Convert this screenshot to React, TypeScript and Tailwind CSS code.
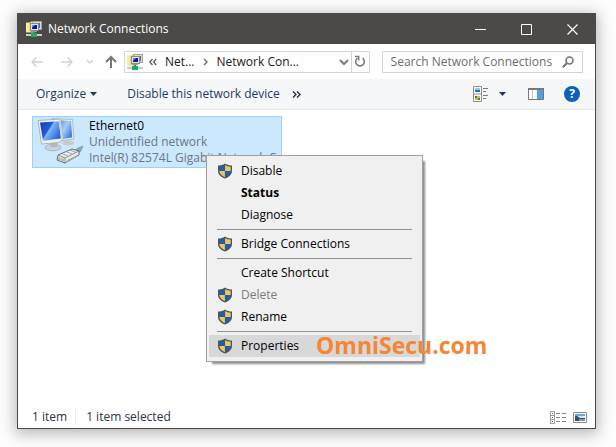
import React from 'react';

function NetworkFolderIcon() {
  return (
    <svg width="16" height="16" viewBox="0 0 16 16" className="shrink-0" aria-hidden="true">
      <path d="M0 1.500h4l1-1h4v11H0z" fill="#ecd67a" />
      <path d="M0 2h3v9H0z" fill="#f8eba0" />
      <rect x="6.500" y="0.500" width="9" height="8" fill="#dddace" stroke="#a3a198" />
      <rect x="9" y="2" width="5" height="5" fill="#4667c4" />
      <rect x="4.500" y="2.500" width="8" height="7" fill="#e4e2d8" stroke="#8d8c85" />
      <rect x="6" y="4" width="5" height="4" fill="#0b1a9c" />
      <path d="M6 4h3l-3 3z" fill="#5a8be8" />
      <rect x="5" y="10" width="6" height="1" fill="#9c9a90" />
      <rect x="7" y="11" width="2" height="2" fill="#1f9d63" />
      <rect x="0" y="13" width="16" height="2" fill="#c4cfc8" />
      <rect x="5" y="12" width="6" height="4" fill="#1fa869" />
    </svg>
  );
}

function ArrowIcon({ direction, className }: { direction: 'left' | 'right' | 'up'; className: string }) {
  const paths = {
    left: 'M13 7H2M6.500 2.500 2 7l4.500 4.500',
    right: 'M1 7h11M7.500 2.500 12 7l-4.500 4.500',
    up: 'M7 13V2M2 7l5-5 5 5',
  };
  return (
    <svg width="14" height="14" viewBox="0 0 14 14" fill="none" stroke="currentColor" className={className} aria-hidden="true">
      <path d={paths[direction]} strokeWidth={direction === 'up' ? 2 : 1.4} />
    </svg>
  );
}

function ShieldIcon() {
  return (
    <svg width="16" height="16" viewBox="0 0 16 16" className="shrink-0" aria-hidden="true">
      <path d="M8 .5C6 2 3.500 2.500 1 2.500V8c0 3.500 3 6 7 7.600C12 14 15 11.500 15 8V2.500C12.500 2.500 10 2 8 .5z" fill="#4b5658" />
      <path d="M7.900 2C6.400 3 4.400 3.600 2.300 3.700V8h5.600z" fill="#1d62a8" />
      <path d="M8.100 2c1.500 1 3.500 1.600 5.600 1.700V8H8.100z" fill="#f0c468" />
      <path d="M2.300 8.100c.2 2.700 2.500 4.700 5.600 6.100V8.100z" fill="#f0c468" />
      <path d="M13.700 8.100c-.2 2.700-2.500 4.700-5.600 6.100V8.100z" fill="#1d62a8" />
    </svg>
  );
}

function EthernetIcon() {
  return (
    <svg width="48" height="48" viewBox="0 0 48 48" className="shrink-0" aria-hidden="true">
      <defs>
        <linearGradient id="screen" x1="0" y1="0" x2="1" y2="0.600">
          <stop offset="0" stopColor="#0d3cb4" />
          <stop offset="0.480" stopColor="#1f5fdc" />
          <stop offset="0.520" stopColor="#82b4f6" />
          <stop offset="1" stopColor="#2568de" />
        </linearGradient>
        <linearGradient id="backScreen" x1="0" y1="0" x2="1" y2="0.600">
          <stop offset="0" stopColor="#2e6cd8" />
          <stop offset="0.600" stopColor="#a8cef8" />
          <stop offset="1" stopColor="#3f82e4" />
        </linearGradient>
      </defs>
      <ellipse cx="31" cy="25" rx="6" ry="2.500" fill="#c3ccd3" />
      <path d="M15 .6 35.500 1.500 37 21 22 23z" fill="#e9edf0" stroke="#9ba9b5" strokeWidth=".7" />
      <path d="M18 2 34 3 35.200 19.500 22 21.500z" fill="url(#backScreen)" />
      <ellipse cx="16" cy="29.500" rx="8" ry="3.300" fill="#cbd2d8" stroke="#98a4ad" strokeWidth=".7" />
      <path d="m13 24 7-1 .5 6h-7z" fill="#aeb9c2" />
      <path d="M1 2.500 23.500 1 26 21.500 22 24.500 4.500 26z" fill="#f0f2f4" stroke="#9aa5af" strokeWidth=".8" />
      <path d="M3 4.500 21.800 3.200 24 20.500 6 22.800z" fill="url(#screen)" />
      <path d="M21.800 3.200 23.500 1 26 21.500l-2-1z" fill="#cdd4da" />
      <path d="m37 33 4-3 5-2-2 5-4 3z" fill="#72b5a5" stroke="#6f9c93" strokeWidth=".6" />
      <path d="m21 37 14-6 7 2v4l-14 8-8-3z" fill="#eceeee" stroke="#59666b" strokeWidth=".9" />
      <path d="m21 37 7 3 14-7M28 40v5" fill="none" stroke="#6b777b" strokeWidth=".8" />
      <path d="m25 35.500 6 2.500m-2-4.500 6 2.500m-2-4 6 2.500" stroke="#899397" strokeWidth=".8" />
      <path d="m30 42 10-5v1.500L30 44z" fill="#a4adb0" />
      <path d="M22 39v3m2-2v2.500m2-2v3" stroke="#59676e" strokeWidth=".8" />
      <path d="M23 40h2v2h-2z" fill="#d7cf5f" />
    </svg>
  );
}

interface MenuEntry {
  label: string;
  shield?: boolean;
  bold?: boolean;
  disabled?: boolean;
  active?: boolean;
}

const menuGroups: MenuEntry[][] = [
  [{ label: 'Disable', shield: true }, { label: 'Status', bold: true }, { label: 'Diagnose' }],
  [{ label: 'Bridge Connections', shield: true }],
  [{ label: 'Create Shortcut' }, { label: 'Delete', shield: true, disabled: true }, { label: 'Rename', shield: true }],
  [{ label: 'Properties', shield: true, active: true }],
];

function TitleBar() {
  return (
    <header className="flex h-[30px] items-center bg-[#4b4a48] pl-2 text-white">
      <NetworkFolderIcon />
      <h1 className="ml-1.5 flex-1">Network Connections</h1>
      <button type="button" aria-label="Minimize" className="flex h-full w-[46px] items-center justify-center">
        <svg width="11" height="11" stroke="currentColor"><path d="M0 5.500h11" /></svg>
      </button>
      <button type="button" aria-label="Maximize" className="flex h-full w-[46px] items-center justify-center">
        <svg width="11" height="11" fill="none" stroke="currentColor"><path d="M.5.500h10v10H.5z" /></svg>
      </button>
      <button type="button" aria-label="Close" className="flex h-full w-[46px] items-center justify-center">
        <svg width="11" height="11" stroke="currentColor" strokeWidth="1.200"><path d="m.5.500 10 10m0-10-10 10" /></svg>
      </button>
    </header>
  );
}

function NavigationBar() {
  return (
    <nav className="flex h-[35px] items-center pr-3 pl-3 text-[#1a1a1a]">
      <button type="button" aria-label="Back" disabled><ArrowIcon direction="left" className="text-[#cfcfcf]" /></button>
      <button type="button" aria-label="Forward" disabled className="ml-4"><ArrowIcon direction="right" className="text-[#cfcfcf]" /></button>
      <button type="button" aria-label="Recent locations" className="ml-3 text-[#cfcfcf]">
        <svg width="8" height="6" fill="none" stroke="currentColor" strokeWidth="1.400"><path d="m1 1 3 3 3-3" /></svg>
      </button>
      <button type="button" aria-label="Up" className="ml-2.5"><ArrowIcon direction="up" className="text-[#767676]" /></button>

      <div className="ml-1.5 flex h-[22px] min-w-0 flex-[241] items-center border border-[#d5d5d5] pl-0.5">
        <NetworkFolderIcon />
        <button type="button" aria-label="Previous folders" className="ml-1.5 text-[#555]">
          <svg width="8" height="8" fill="none" stroke="currentColor" strokeWidth="1.200"><path d="M3.500 1 .8 4l2.700 3M7.200 1 4.500 4l2.700 3" /></svg>
        </button>
        <button type="button" className="ml-2">Net...</button>
        <svg width="6" height="8" fill="none" stroke="#6b6b6b" strokeWidth="1.400" className="ml-2"><path d="m1 1 3 3-3 3" /></svg>
        <button type="button" className="ml-2 flex-1 text-left whitespace-nowrap">Network Con...</button>
        <button type="button" aria-label="Address history" className="mr-0.5">
          <svg width="10" height="8" fill="none" stroke="#7c7c7c" strokeWidth="2"><path d="m1 2 4 4 4-4" /></svg>
        </button>
        <button type="button" aria-label="Refresh" className="flex h-full w-[18px] items-center justify-center border-l border-[#d5d5d5]">
          <svg width="12" height="13" viewBox="0 0 12 13" fill="none" stroke="#7a7a7a" strokeWidth="1.600">
            <path d="M8.500 3.200A4.300 4.300 0 1 1 3.500 3.200" />
            <path d="M1 1.500h3.700v4" strokeWidth="1.500" />
          </svg>
        </button>
      </div>

      <label className="ml-3 flex h-[22px] min-w-0 flex-[183] items-center border border-[#d5d5d5] pr-2 pl-2">
        <input
          type="text"
          aria-label="Search Network Connections"
          placeholder="Search Network Connections"
          className="min-w-0 flex-1 outline-none placeholder:text-[#6d6d6d]"
        />
        <svg width="12" height="12" fill="none" stroke="#757575" strokeWidth="1.600" className="shrink-0">
          <circle cx="7.500" cy="4.500" r="3.500" />
          <path d="M5 7 .8 11.200" strokeWidth="2" />
        </svg>
      </label>
    </nav>
  );
}

function CommandBar() {
  return (
    <div role="toolbar" className="flex h-[31px] items-center border-b border-[#e3e8ec] bg-[#f5f7f9] pr-[15px] pl-[18px] text-[#1e395b]">
      <button type="button" className="flex items-center gap-1">
        Organize
        <svg width="7" height="4" fill="currentColor"><path d="M0 0h7L3.500 4z" /></svg>
      </button>
      <button type="button" className="ml-[30px]">Disable this network device</button>
      <button type="button" aria-label="More commands" className="ml-3">
        <svg width="9" height="7" fill="none" stroke="#1b2a40" strokeWidth="1.300"><path d="m1 .5 3 3-3 3m4-6 3 3-3 3" /></svg>
      </button>
      <div className="flex-1" />
      <button type="button" aria-label="Change view">
        <svg width="16" height="16" viewBox="0 0 16 16" fill="none">
          <path d="M.5.500h8v15h-8zM.5 8h8" stroke="#8d8d8d" fill="#fff" />
          <path d="M2 2h5v2H2z" fill="#9cc9ef" />
          <path d="M2 4h5v2H2z" fill="#2a6da8" />
          <path d="M2 10h5v4H2z" fill="#c8bd5d" />
          <path d="M2 10h2v2H2zm3 2h2v2H5z" fill="#597f38" />
          <path d="M10 2.500h5M10 5.500h3M10 9.500h5M10 12.500h3" stroke="#7a7a7a" />
        </svg>
      </button>
      <button type="button" aria-label="View options" className="ml-2.5">
        <svg width="7" height="4" fill="currentColor"><path d="M0 0h7L3.500 4z" /></svg>
      </button>
      <button type="button" aria-label="Preview pane" className="ml-[22px]">
        <svg width="16" height="12" fill="none">
          <path d="M.5.500h15v11H.5z" fill="#fff" stroke="#777" />
          <path d="M0 0h16v2H0z" fill="#777" />
          <path d="M4.500 2v9" stroke="#c9c9c9" />
          <path d="M9 2h6v9H9z" fill="#4ba3e3" />
        </svg>
      </button>
      <button type="button" aria-label="Help" className="ml-5 flex size-4 items-center justify-center rounded-full bg-[#0b62bd] text-xs leading-4 font-bold text-white">
        ?
      </button>
    </div>
  );
}

function ContextMenu() {
  return (
    <div
      role="menu"
      className="absolute top-[45px] left-[188px] w-[217px] border border-[#a0a0a0] bg-[#f0f0f0] px-0.5 py-1 text-black shadow-[4px_4px_2px_-2px_rgba(0,0,0,0.45)]"
    >
      {menuGroups.map((group, index) => (
        <div key={index}>
          {index > 0 && <div className="mx-2 py-[3px]"><div className="h-px bg-[#919191]" /></div>}
          {group.map((entry) => (
            <button
              key={entry.label}
              type="button"
              role="menuitem"
              disabled={entry.disabled}
              className={`flex h-[22px] w-full items-center gap-2 pl-2 text-left ${entry.active ? 'bg-[#d8d8d8]' : ''} ${entry.bold ? 'font-bold' : ''} ${entry.disabled ? 'text-[#7a7a7a]' : ''}`}
            >
              <span className="size-4">{entry.shield && <ShieldIcon />}</span>
              {entry.label}
            </button>
          ))}
        </div>
      ))}
      <div className="pointer-events-none absolute bottom-0 left-[109px] text-[23px] leading-8 font-bold text-[#f58634]">
        OmniSecu.com
      </div>
    </div>
  );
}

function StatusBar() {
  return (
    <footer className="flex h-[22px] items-center pr-2 pl-3.5 text-[#2b3346]">
      <span>1 item</span>
      <span className="ml-2 flex-1 border-l border-[#eeeeee] pl-2.5">1 item selected</span>
      <button type="button" aria-label="Details view">
        <svg width="16" height="13" fill="none" stroke="#858585">
          <path d="M.5.500h4v12h-4zM.5 4.500h4M.5 8.500h4" stroke="#9a9a9a" />
          <path d="M2 2.500h1M2 6.500h1M2 10.500h1" stroke="#555" />
          <path d="M6 2.500h4m2 0h4M6 6.500h4m2 0h4M6 10.500h4m2 0h4" />
        </svg>
      </button>
      <button type="button" aria-label="Large icons view" className="ml-[7px]">
        <svg width="14" height="11" fill="none">
          <path d="M.5.500h13v10H.5z" fill="#fff" stroke="#8b8b8b" />
          <path d="M2 2h10v3H2z" fill="#69a5e4" />
          <path d="M5 4h7v2H5z" fill="#d7e9f8" />
          <path d="M2 4h2l3 2h5v3H2z" fill="#34546a" />
          <path d="M6 7h6v2H6z" fill="#6f9cbd" />
        </svg>
      </button>
    </footer>
  );
}

export default function App() {
  return (
    <div className="flex min-h-screen flex-col bg-[#fdfdfd] pt-[13px] pr-5 pb-[18px] pl-[17px] font-['Open_Sans','Noto_Sans',sans-serif] text-xs leading-4">
      <div className="flex flex-1 flex-col border border-[#4b4a48] bg-white shadow-[0_3px_14px_2px_rgba(0,0,0,0.28)]">
        <TitleBar />
        <NavigationBar />
        <CommandBar />
        <main className="relative flex-1 px-3.5 pt-1.5">
          <button type="button" className="flex h-[52px] w-[250px] items-center border border-[#99d1ff] bg-[#cce8ff] pl-1 text-left">
            <EthernetIcon />
            <span className="ml-1 min-w-0 flex-1 text-[#6d7680]">
              <span className="block text-black">Ethernet0</span>
              <span className="block">Unidentified network</span>
              <span className="block whitespace-nowrap">Intel(R) 82574L Gigabit Network C...</span>
            </span>
          </button>
          <ContextMenu />
        </main>
        <StatusBar />
      </div>
    </div>
  );
}
